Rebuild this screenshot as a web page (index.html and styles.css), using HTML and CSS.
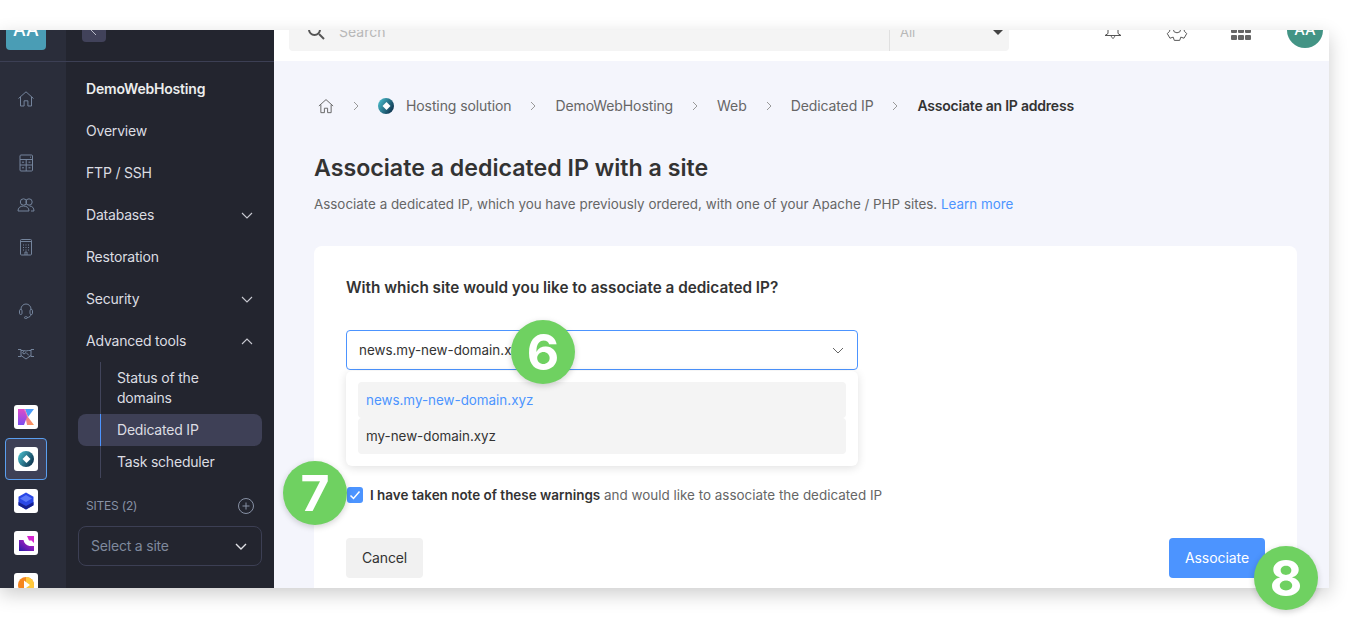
FILE: index.html
```html
<!DOCTYPE html>
<html lang="en">
<head>
	<meta charset="UTF-8">
	<title>Associate a dedicated IP with a site</title>
	<link rel="stylesheet" href="styles.css">
</head>
<body>
	<div class="frame">
		<!-- icon rail -->
		<div class="rail">
			<div class="rail-head"><div class="rail-account">AA</div></div>
			<div class="rail-body">
				<div class="rail-group">
					<div class="rail-item">
						<svg class="rail-icon" viewBox="0 0 18 18"><path d="M1.500 8.500 9 1.800l7.500 6.700M3.500 7v9h3.600v-5.200h3.800V16h3.600V7"/></svg>
					</div>
				</div>
				<div class="rail-group">
					<div class="rail-item">
						<svg class="rail-icon" viewBox="0 0 18 18"><rect x="3" y="1" width="12.500" height="16" rx="1"/><path d="M3 5.500h12.500M3 11h12.500M9.200 5.500V17M5 8.200h2M11.500 8.200h2M5 13.800h2M11.500 13.800h2M13 3.200h1"/></svg>
					</div>
					<div class="rail-item">
						<svg class="rail-icon" viewBox="0 0 18 18"><circle cx="6.500" cy="6" r="3.200"/><circle cx="12" cy="6" r="3.200"/><path d="M1 15c0-3 2-5 5.500-5s5.500 2 5.500 5zM12.500 10c2.800 0 4.500 2 4.500 5h-3"/></svg>
					</div>
					<div class="rail-item">
						<svg class="rail-icon" viewBox="0 0 18 18"><rect x="3.500" y="1.500" width="11" height="15.500" rx="1"/><path d="M3.500 3.500h11M6 7h1M8.500 7h1M11 7h1M6 9.500h1M8.500 9.500h1M11 9.500h1M6 12h1M8.500 12h1M11 12h1M8 17v-3h2v3"/></svg>
					</div>
				</div>
				<div class="rail-group">
					<div class="rail-item">
						<svg class="rail-icon" viewBox="0 0 18 18"><path d="M4 8V7a5 5 0 0 1 10 0v1M14 12c0 2-1.500 3.500-4 3.500"/><rect x="2.500" y="7.500" width="2.500" height="5" rx="1.200"/><rect x="13" y="7.500" width="2.500" height="5" rx="1.200"/><rect x="7.500" y="14.700" width="2.800" height="1.800" rx=".9"/></svg>
					</div>
					<div class="rail-item">
						<svg class="rail-icon" viewBox="0 0 18 18"><path d="M1 5.500h3v7H1M17 5.500h-3v7h3M4 6.500h2.500L9 7l2.500-.5H14M4 11.500 9 15l5-3.500M7 7 5.500 9 7 10l2-1.500 3 3"/></svg>
					</div>
				</div>
				<div class="rail-group">
					<div class="rail-item">
						<div class="tile">
							<svg viewBox="0 0 24 24"><defs><linearGradient id="kg" x1="0" y1="0" x2="0" y2="1"><stop offset="0" stop-color="#e04bc8"/><stop offset="1" stop-color="#7a4cf0"/></linearGradient><linearGradient id="ko" x1="0" y1="0" x2="1" y2="1"><stop offset="0" stop-color="#e86ac0"/><stop offset="1" stop-color="#fb9a50"/></linearGradient></defs><path fill="#4b9cf8" d="M11 4h9l-6 8z"/><path fill="url(#ko)" d="M10 4h1l3 8 6 8h-7z"/><path fill="url(#kg)" d="M4 4h6l3 8-3 8H4z"/></svg>
						</div>
					</div>
					<div class="rail-item rail-item-on">
						<div class="tile">
							<svg viewBox="0 0 24 24"><defs><linearGradient id="cg" x1="0" y1=".2" x2="1" y2=".8"><stop offset="0" stop-color="#48bccb"/><stop offset="1" stop-color="#0b2c48"/></linearGradient></defs><circle cx="12" cy="12" r="8" fill="url(#cg)"/><path fill="#fff" d="m12.500 8 4 4-4 4-4-4z"/></svg>
						</div>
					</div>
					<div class="rail-item">
						<div class="tile">
							<svg viewBox="0 0 24 24"><path fill="#2a47e6" d="m12 3.500 7.500 4.200v8.600L12 20.500l-7.500-4.200V7.700z"/><path fill="#16208f" d="m4.500 13 7.500 4 7.500-4v3.300L12 20.500l-7.500-4.200z"/><path fill="#5a78f8" d="m12 6 6 3.500-6 3.500-6-3.500z"/></svg>
						</div>
					</div>
					<div class="rail-item">
						<div class="tile">
							<svg viewBox="0 0 24 24"><defs><linearGradient id="pg" x1="0" y1="1" x2="1" y2="0"><stop offset="0" stop-color="#2a1aa8"/><stop offset="1" stop-color="#d21fc8"/></linearGradient></defs><path fill="#d524cf" d="M13 5h7v7l-2.500-2.500H15z"/><path fill="url(#pg)" d="M5 9h4.500c.5 3 3 5.500 6 6H20v5H5z"/></svg>
						</div>
					</div>
					<div class="rail-item">
						<div class="tile">
							<svg viewBox="0 0 24 24"><circle cx="12" cy="12" r="8" fill="#f5861f"/><path fill="#ffc93c" d="M12 4a8 8 0 0 1 0 16z"/><path fill="#fff" d="m10 7.500 6 4.500-6 4.500z"/></svg>
						</div>
					</div>
				</div>
			</div>
		</div>

		<!-- sidebar -->
		<div class="side">
			<div class="side-head">
				<div class="back-btn"><svg viewBox="0 0 24 24"><path d="m14 7-5 5 5 5"/></svg></div>
			</div>
			<ul class="menu">
				<li class="menu-title">DemoWebHosting</li>
				<li>Overview</li>
				<li>FTP / SSH</li>
				<li>Databases<svg class="chev" viewBox="0 0 12 7"><path d="m1 1 5 5 5-5"/></svg></li>
				<li>Restoration</li>
				<li>Security<svg class="chev" viewBox="0 0 12 7"><path d="m1 1 5 5 5-5"/></svg></li>
				<li>Advanced tools<svg class="chev" viewBox="0 0 12 7"><path d="m1 6 5-5 5 5"/></svg></li>
			</ul>
			<ul class="submenu">
				<li class="sub-first">Status of the domains</li>
				<li class="sub-on">Dedicated IP</li>
				<li>Task scheduler</li>
			</ul>
			<div class="sites-row">
				<span>SITES (2)</span>
				<svg class="plus" viewBox="0 0 16 16"><circle cx="8" cy="8" r="7.500"/><path d="M8 4.500v7M4.500 8h7"/></svg>
			</div>
			<div class="site-select">
				<span>Select a site</span>
				<svg class="chev chev-light" viewBox="0 0 12 7"><path d="m1 1 5 5 5-5"/></svg>
			</div>
		</div>

		<!-- main area -->
		<div class="main">
			<div class="topbar">
				<div class="search">
					<svg class="search-icon" viewBox="0 0 18 18"><circle cx="7.500" cy="7.500" r="5.500"/><path d="m12 12 5 5"/></svg>
					<span class="search-text">Search</span>
					<div class="search-filter">
						<span>All</span>
						<span class="caret"></span>
					</div>
				</div>
				<div class="top-icons">
					<svg class="top-icon top-bell" viewBox="0 0 18 24"><path d="M9 2c3.500 0 5 2.500 5 6v6.500l3 2H1l3-2V8c0-3.500 1.500-6 5-6zM7.200 16.500c.3 3.600 3.300 3.600 3.600 0"/></svg>
					<svg class="top-icon top-gear" viewBox="0 0 24 24"><path d="M9.500 1.500h5l1 3 3-1L21 7.800 18.700 10v4l2.300 2.200-2.500 4.300-3-1-1 3h-5l-1-3-3 1L3 16.200 5.300 14v-4L3 7.800l2.500-4.300 3 1z"/><circle cx="12" cy="12" r="3.500"/></svg>
					<div class="apps">
						<i></i><i></i><i></i><i></i><i></i><i></i>
					</div>
					<div class="avatar">AA</div>
				</div>
			</div>

			<div class="content">
				<div class="crumbs">
					<svg class="crumb-home" viewBox="0 0 18 18"><path d="M1 9 9 1.800 17 9M3.200 7.500v9h4v-5h3.600v5h4v-9"/></svg>
					<svg class="crumb-sep" viewBox="0 0 6 10"><path d="m1 1 4 4-4 4"/></svg>
					<svg class="crumb-logo" viewBox="4 4 16 16"><defs><linearGradient id="cg2" x1="0" y1=".2" x2="1" y2=".8"><stop offset="0" stop-color="#48bccb"/><stop offset="1" stop-color="#0b2c48"/></linearGradient></defs><circle cx="12" cy="12" r="8" fill="url(#cg2)"/><path fill="#fff" d="m12.500 8 4 4-4 4-4-4z"/></svg>
					<span>Hosting solution</span>
					<svg class="crumb-sep" viewBox="0 0 6 10"><path d="m1 1 4 4-4 4"/></svg>
					<span>DemoWebHosting</span>
					<svg class="crumb-sep" viewBox="0 0 6 10"><path d="m1 1 4 4-4 4"/></svg>
					<span>Web</span>
					<svg class="crumb-sep" viewBox="0 0 6 10"><path d="m1 1 4 4-4 4"/></svg>
					<span>Dedicated IP</span>
					<svg class="crumb-sep" viewBox="0 0 6 10"><path d="m1 1 4 4-4 4"/></svg>
					<b>Associate an IP address</b>
				</div>
				<h1>Associate a dedicated IP with a site</h1>
				<p class="intro">Associate a dedicated IP, which you have previously ordered, with one of your Apache / PHP sites. <a href="#">Learn more</a></p>

				<div class="card">
					<h2>With which site would you like to associate a dedicated IP?</h2>
					<div class="picker">
						<div class="picker-box">
							<span>news.my-new-domain.xyz</span>
							<svg class="chev chev-grey" viewBox="0 0 12 7"><path d="m1 1 5 5 5-5"/></svg>
						</div>
						<div class="picker-menu">
							<div class="picker-opt picker-opt-on">news.my-new-domain.xyz</div>
							<div class="picker-opt">my-new-domain.xyz</div>
						</div>
					</div>
					<div class="agree">
						<span class="check"><svg viewBox="0 0 16 16"><path d="m3.500 8.500 3 3 6-7"/></svg></span>
						<span><b>I have taken note of these warnings</b> and would like to associate the dedicated IP</span>
					</div>
					<div class="actions">
						<div class="btn btn-cancel">Cancel</div>
						<div class="btn btn-blue">Associate</div>
					</div>
				</div>
			</div>
		</div>
	</div>

	<!-- step markers over the screenshot -->
	<div class="step step-6">6</div>
	<div class="step step-7">7</div>
	<div class="step step-8">8</div>
</body>
</html>
```

FILE: styles.css
```css
*{
	margin: 0;
	padding: 0;
	list-style: none;
	box-sizing: border-box;
}
html,body{
	height: 100%;
	overflow: hidden;
}
body{
	background-color: #fff;
	font-family: "Inter", "Liberation Sans", sans-serif;
	font-size: 14px;
	line-height: 20px;
	color: #333;
}
svg{
	display: block;
}
.frame{
	display: flex;
	width: 1329px;
	height: 558px;
	margin-top: 30px;
	overflow: hidden;
	box-shadow: 0 6px 18px rgba(0,0,0,.2);
}

/* rail */
.rail{
	flex: none;
	width: 66px;
	background-color: #2a2d3a;
}
.rail-head{
	display: flex;
	align-items: flex-end;
	height: 32px;
	border-bottom: 1px solid #3c3f54;
}
.rail-account{
	flex: none;
	width: 40px;
	height: 40px;
	margin: 0 0 11px 6px;
	border-radius: 4px;
	background-color: #4a9db5;
	color: #fff;
	font-size: 18px;
	font-weight: 500;
	line-height: 40px;
	text-align: center;
}
.rail-body{
	display: flex;
	flex-direction: column;
	gap: 22px;
	padding-top: 16px;
}
.rail-item{
	display: flex;
	align-items: center;
	justify-content: center;
	width: 42px;
	height: 42px;
	margin-left: 5px;
	border: 1px solid transparent;
	border-radius: 4px;
}
.rail-item-on{
	background-color: #3e4056;
	border-color: #5a9ff0;
}
.rail-icon{
	width: 18px;
	height: 18px;
	fill: none;
	stroke: #74849c;
	stroke-width: 1;
}
.tile{
	flex: none;
	width: 24px;
	height: 24px;
	border-radius: 3px;
	background-color: #fff;
}

/* sidebar */
.side{
	flex: none;
	width: 208px;
	background-color: #23252f;
	color: #dcdde2;
	letter-spacing: -.2px;
}
.side-head{
	display: flex;
	align-items: flex-end;
	height: 32px;
	padding: 0 0 19px 16px;
	border-bottom: 1px solid #3c3f54;
}
.back-btn{
	flex: none;
	width: 24px;
	height: 24px;
	border-radius: 4px;
	background-color: #41425a;
}
.back-btn svg{
	fill: none;
	stroke: #b9bbc8;
	stroke-width: 1;
}
.menu{
	padding: 5px 20px 0;
}
.menu li{
	display: flex;
	align-items: center;
	justify-content: space-between;
	height: 42px;
}
.menu .menu-title{
	height: 43px;
	color: #eceded;
	font-weight: 600;
}
.chev{
	flex: none;
	width: 12px;
	height: 7px;
	fill: none;
	stroke: #c9cad2;
	stroke-width: 1.100;
}
.menu .chev{
	margin-right: 1px;
}
.chev-light{
	stroke: #e0e1e6;
	stroke-width: 1.400;
}
.chev-grey{
	stroke: #666;
	stroke-width: 1;
}
.submenu{
	margin: 0 12px;
}
.submenu li{
	position: relative;
	padding: 6px 12px 6px 39px;
}
.submenu li::before{
	content: "";
	position: absolute;
	top: 0;
	bottom: 0;
	left: 22px;
	width: 1px;
	background-color: #41445a;
}
.submenu .sub-first{
	padding-right: 40px;
}
.submenu .sub-on{
	border-radius: 8px;
	background-color: #3e4056;
}
.submenu .sub-on::before{
	background-color: #4c94ff;
}
.sites-row{
	display: flex;
	align-items: center;
	justify-content: space-between;
	height: 20px;
	margin-top: 18px;
	padding: 0 20px;
	color: #8791a5;
	font-size: 12px;
}
.plus{
	width: 16px;
	height: 16px;
	fill: none;
	stroke: #8791a5;
	stroke-width: 1;
}
.site-select{
	display: flex;
	align-items: center;
	justify-content: space-between;
	height: 40px;
	margin: 10px 12px 0;
	padding: 0 14px 0 12px;
	border: 1px solid #3c3f54;
	border-radius: 8px;
	color: #7f899d;
}

/* main */
.main{
	flex: 1;
	min-width: 0;
	background-color: #f4f5fc;
}
.topbar{
	display: flex;
	align-items: flex-end;
	height: 31px;
	background-color: #fff;
}
.search{
	display: flex;
	flex: none;
	align-items: center;
	width: 720px;
	height: 40px;
	margin: 0 0 10px 15px;
	border-radius: 4px;
	background-color: #f4f4f4;
	color: #b8b8b8;
}
.search-icon{
	flex: none;
	width: 18px;
	height: 18px;
	margin-left: 18px;
	fill: none;
	stroke: #555;
	stroke-width: 2;
}
.search-text{
	flex: 1;
	margin: 2px 0 0 14px;
}
.search-filter{
	display: flex;
	flex: none;
	align-items: center;
	justify-content: space-between;
	width: 120px;
	height: 100%;
	padding: 1px 6px 0 10px;
	border-left: 1px solid #e0e0e0;
	font-size: 13px;
}
.caret{
	width: 0;
	height: 0;
	margin-top: 1px;
	border-top: 5px solid #444;
	border-left: 5px solid transparent;
	border-right: 5px solid transparent;
}
.top-icons{
	display: flex;
	flex: 1;
	align-items: flex-end;
	justify-content: flex-end;
	gap: 42px;
	padding: 0 6px 13px 0;
}
.top-icon{
	flex: none;
	fill: none;
	stroke: #555;
	stroke-width: 1;
}
.top-bell{
	width: 18px;
	height: 24px;
	margin-bottom: 5px;
}
.top-gear{
	width: 26px;
	height: 26px;
	margin-bottom: 6px;
	stroke-width: .9;
}
.apps{
	display: grid;
	flex: none;
	grid-template-columns: repeat(3,6px);
	grid-auto-rows: 5px;
	gap: 2px 1px;
	margin: 0 0 8px -1px;
}
.apps i{
	border-radius: 1px;
	background-color: #666;
}
.avatar{
	flex: none;
	width: 36px;
	height: 36px;
	margin-left: -6px;
	border-radius: 50%;
	background-color: #439485;
	color: #fff;
	font-size: 15px;
	font-weight: 500;
	line-height: 36px;
	text-align: center;
}
.content{
	padding: 35px 32px 0 40px;
}
.crumbs{
	display: flex;
	align-items: center;
	gap: 19px;
	height: 20px;
	padding-left: 4px;
	color: #666;
	letter-spacing: -.1px;
}
.crumbs b{
	color: #333;
	font-weight: 600;
	letter-spacing: -.22px;
}
.crumb-home{
	flex: none;
	width: 16px;
	height: 16px;
	fill: none;
	stroke: #666;
	stroke-width: 1.100;
}
.crumb-logo{
	flex: none;
	width: 16px;
	height: 16px;
	margin-right: -7px;
}
.crumb-sep{
	flex: none;
	width: 6px;
	height: 10px;
	fill: none;
	stroke: #999;
	stroke-width: 1;
}
h1{
	margin-top: 36px;
	color: #333;
	font-size: 23.200px;
	font-weight: 600;
	line-height: 32px;
}
.intro{
	margin-top: 10px;
	color: #666;
	font-size: 13.400px;
}
.intro a{
	color: #4c94ff;
	text-decoration: none;
}
.card{
	height: 400px;
	margin-top: 32px;
	padding: 30px 32px 0;
	border-radius: 8px;
	background-color: #fff;
}
h2{
	color: #333;
	font-size: 15.300px;
	font-weight: 600;
	line-height: 24px;
}
.picker{
	position: relative;
	width: 512px;
	margin-top: 30px;
	font-size: 13.400px;
}
.picker-box{
	display: flex;
	align-items: center;
	justify-content: space-between;
	height: 40px;
	padding: 0 13px 0 12px;
	border: 1px solid #4c94ff;
	border-radius: 4px;
}
.picker-menu{
	position: absolute;
	top: 41px;
	left: 0;
	right: 0;
	padding: 11px 12px 12px;
	border-radius: 6px;
	background-color: #fff;
	box-shadow: 0 2px 10px rgba(0,0,0,.12);
}
.picker-opt{
	height: 36px;
	padding-left: 8px;
	border-radius: 4px;
	background-color: #f4f4f4;
	line-height: 36px;
}
.picker-opt-on{
	color: #4c94ff;
}
.agree{
	display: flex;
	align-items: center;
	gap: 7px;
	margin-top: 115px;
	color: #666;
	font-size: 13.450px;
}
.agree b{
	color: #333;
	font-weight: 600;
}
.check{
	flex: none;
	width: 16px;
	height: 16px;
	margin-left: 1px;
	border-radius: 3px;
	background-color: #4c94ff;
}
.check svg{
	width: 16px;
	height: 16px;
	fill: none;
	stroke: #fff;
	stroke-width: 1.500;
}
.actions{
	display: flex;
	justify-content: space-between;
	margin-top: 33px;
}
.btn{
	height: 40px;
	padding: 0 16px;
	border-radius: 4px;
	background-color: #f1f1f1;
	line-height: 40px;
}
.btn-cancel{
	letter-spacing: -.15px;
}
.btn-blue{
	width: 96px;
	padding: 0;
	background-color: #4c94ff;
	color: #fff;
	letter-spacing: -.05px;
	text-align: center;
}

/* step markers */
.step{
	position: absolute;
	width: 64px;
	height: 64px;
	border-radius: 50%;
	background-color: #6fd161;
	box-shadow: 0 2px 6px rgba(0,0,0,.18);
	color: #fff;
	font-size: 50px;
	font-weight: 700;
	line-height: 64px;
	text-align: center;
}
.step-6{
	top: 320px;
	left: 511px;
}
.step-7{
	top: 461px;
	left: 283px;
}
.step-8{
	top: 546px;
	left: 1254px;
}
```
